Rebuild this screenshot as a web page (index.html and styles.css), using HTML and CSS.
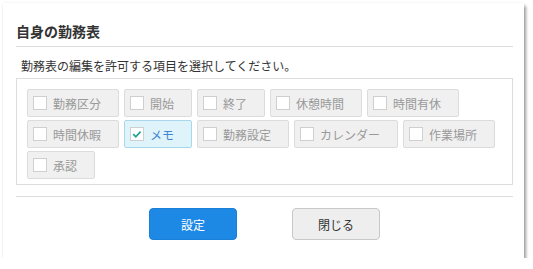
FILE: index.html
```html
<!DOCTYPE html>
<html lang="ja">
<head>
<meta charset="utf-8">
<link rel="stylesheet" href="styles.css">
</head>
<body>
<div class="dialog">
  <div class="title">自身の勤務表</div>
  <div class="desc">勤務表の編集を許可する項目を選択してください。</div>
  <div class="box">
    <div class="chip"><span class="cb"></span><span>勤務区分</span></div>
    <div class="chip"><span class="cb"></span><span>開始</span></div>
    <div class="chip"><span class="cb"></span><span>終了</span></div>
    <div class="chip"><span class="cb"></span><span>休憩時間</span></div>
    <div class="chip"><span class="cb"></span><span>時間有休</span></div>
    <div class="chip"><span class="cb"></span><span>時間休暇</span></div>
    <div class="chip checked"><span class="cb"><svg width="14" height="14" viewBox="0 0 14 14"><path d="M2.6 7.2 L5.6 10.2 L11.2 4.2" fill="none" stroke="#22a38f" stroke-width="2"/></svg></span><span>メモ</span></div>
    <div class="chip"><span class="cb"></span><span>勤務設定</span></div>
    <div class="chip"><span class="cb"></span><span>カレンダー</span></div>
    <div class="chip"><span class="cb"></span><span>作業場所</span></div>
    <div class="chip"><span class="cb"></span><span>承認</span></div>
  </div>
  <div class="sep"></div>
  <div class="actions">
    <button class="btn primary">設定</button>
    <button class="btn">閉じる</button>
  </div>
</div>
</body>
</html>
```

FILE: styles.css
```css
* { box-sizing: border-box; }
html, body { margin: 0; padding: 0; background: #fff; }
body {
  font-family: "Noto Sans CJK JP", "Noto Sans", sans-serif;
  color: #333;
}
.dialog {
  margin: 3px 0 0 3px;
  width: 521px;
  background: #fff;
  padding: 18px 11px 18px 13px;
  box-shadow: 2px 3px 3px rgba(0,0,0,0.38), 0 0 2px rgba(0,0,0,0.08);
}
.title {
  font-size: 14px;
  font-weight: bold;
  line-height: 20px;
  padding-bottom: 5px;
  border-bottom: 1px solid #ddd;
  color: #333;
}
.desc {
  margin-top: 10px;
  padding-left: 5px;
  font-size: 12px;
  line-height: 18px;
  color: #333;
}
.box {
  margin-top: 3px;
  border: 1px solid #ddd;
  padding: 10px 10px 5px;
  display: flex;
  flex-wrap: wrap;
  gap: 3px 5px;
}
.chip {
  height: 28px;
  display: flex;
  align-items: center;
  gap: 6px;
  padding: 0 17px 0 5px;
  background: #f0f0f0;
  border: 1px solid #dcdcdc;
  border-radius: 2px;
  font-size: 12px;
  color: #999;
}
.cb {
  width: 14px;
  height: 14px;
  background: #fff;
  border: 1px solid #cfcfcf;
  display: flex;
  align-items: center;
  justify-content: center;
}
.chip.checked {
  background: #dff4fa;
  border-color: #a9d8ee;
  color: #3f84d6;
}
.sep {
  margin-top: 11px;
  border-top: 1px solid #ddd;
}
.actions {
  margin-top: 11px;
  display: flex;
  justify-content: center;
  gap: 55px;
}
.btn {
  width: 88px;
  height: 32px;
  border-radius: 4px;
  border: 1px solid #c8c8c8;
  background: #eee;
  color: #333;
  font-family: "Noto Sans CJK JP", "Noto Sans", sans-serif;
  font-size: 12px;
  padding: 0;
}
.btn.primary {
  background: #1e88e5;
  border-color: #1a7fd6;
  color: #fff;
}
```
